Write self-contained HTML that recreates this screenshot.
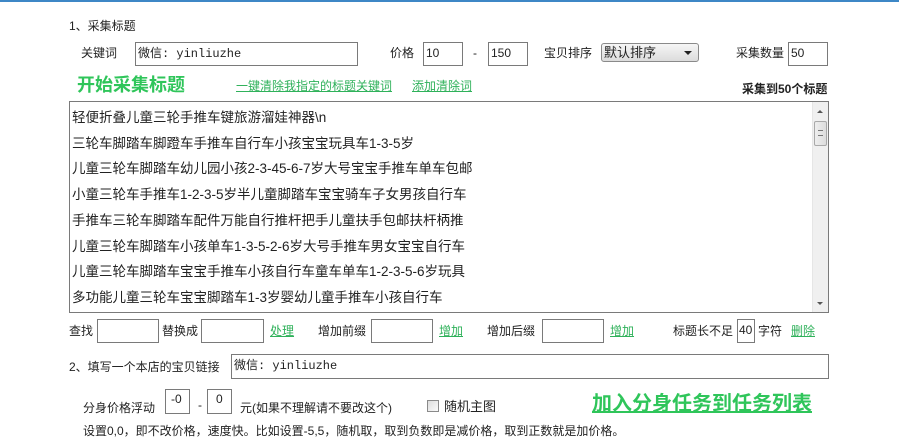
<!DOCTYPE html>
<html><head><meta charset="utf-8"><style>
*{margin:0;padding:0;box-sizing:border-box}
body{width:899px;height:439px;background:#fff;position:relative;overflow:hidden;font-family:"Liberation Sans","Noto Sans CJK SC",sans-serif;font-size:12px;color:#222}
.a{position:absolute;white-space:nowrap;line-height:14px}
.in{position:absolute;border:1px solid #7a7a7a;background:#fff;font-size:12px;line-height:20px;padding-left:2px;white-space:nowrap}
.lk{color:#2fb15a;text-decoration:underline}
.big{color:#2fc55a;font-weight:bold;font-size:18px;line-height:22px}
.mono{font-family:"Liberation Mono","Noto Sans CJK SC",monospace;font-size:12px}
</style></head><body>
<div style="position:absolute;left:0;top:0;width:899px;height:2px;background:#3d87c6"></div>
<div class="a" style="left:69px;top:19px">1、采集标题</div>
<div class="a" style="left:81px;top:46px">关键词</div>
<div class="in" style="left:135px;top:42px;width:223px;height:24px"><span class="mono">微信: yinliuzhe</span></div>
<div class="a" style="left:390px;top:46px">价格</div>
<div class="in" style="left:423px;top:42px;width:40px;height:24px">10</div>
<div class="a" style="left:473px;top:46px">-</div>
<div class="in" style="left:488px;top:42px;width:40px;height:24px">150</div>
<div class="a" style="left:544px;top:46px">宝贝排序</div>
<div style="position:absolute;left:601px;top:43px;width:98px;height:19px;border:1px solid #8a8a8a;border-radius:3px;background:linear-gradient(#f6f6f6,#dcdcdc);font-size:13px;line-height:17px;padding-left:2px">默认排序<span style="position:absolute;right:6px;top:7px;width:0;height:0;border-left:4px solid transparent;border-right:4px solid transparent;border-top:4px solid #222"></span></div>
<div class="a" style="left:736px;top:46px">采集数量</div>
<div class="in" style="left:788px;top:42px;width:40px;height:24px">50</div>
<div class="a big" style="left:77px;top:74px">开始采集标题</div>
<div class="a lk" style="left:236px;top:79px">一键清除我指定的标题关键词</div>
<div class="a lk" style="left:412px;top:79px">添加清除词</div>
<div class="a" style="left:742px;top:82px;font-weight:bold">采集到50个标题</div>
<div style="position:absolute;left:69px;top:101px;width:760px;height:212px;border:1px solid #7a7a7a;background:#fff;overflow:hidden">
<div style="position:absolute;left:2px;top:3px;font-size:13.5px;line-height:25.7px;white-space:nowrap">
轻便折叠儿童三轮手推车键旅游溜娃神器\n<br>三轮车脚踏车脚蹬车手推车自行车小孩宝宝玩具车1-3-5岁<br>儿童三轮车脚踏车幼儿园小孩2-3-45-6-7岁大号宝宝手推车单车包邮<br>小童三轮车手推车1-2-3-5岁半儿童脚踏车宝宝骑车子女男孩自行车<br>手推车三轮车脚踏车配件万能自行推杆把手儿童扶手包邮扶杆柄推<br>儿童三轮车脚踏车小孩单车1-3-5-2-6岁大号手推车男女宝宝自行车<br>儿童三轮车脚踏车宝宝手推车小孩自行车童车单车1-2-3-5-6岁玩具<br>多功能儿童三轮车宝宝脚踏车1-3岁婴幼儿童手推车小孩自行车</div>
<div style="position:absolute;right:0;top:0;width:16px;height:210px;background:#f0f0f0;border-left:1px solid #e6e6e6">
<div style="position:absolute;left:4px;top:8px;border-left:3px solid transparent;border-right:3px solid transparent;border-bottom:3px solid #555"></div>
<div style="position:absolute;left:1px;top:19px;width:13px;height:25px;border:1px solid #a9a9a9;border-radius:2px;background:linear-gradient(90deg,#eee,#ddd)"></div>
<div style="position:absolute;left:5px;top:28px;width:5px;height:6px;border-top:1px solid #777;border-bottom:1px solid #777"></div>
<div style="position:absolute;left:4px;top:200px;border-left:3px solid transparent;border-right:3px solid transparent;border-top:3px solid #555"></div>
</div></div>
<div class="a" style="left:69px;top:324px">查找</div>
<div class="in" style="left:97px;top:319px;width:62px;height:24px"></div>
<div class="a" style="left:162px;top:324px">替换成</div>
<div class="in" style="left:201px;top:319px;width:63px;height:24px"></div>
<div class="a lk" style="left:270px;top:324px">处理</div>
<div class="a" style="left:318px;top:324px">增加前缀</div>
<div class="in" style="left:371px;top:319px;width:62px;height:24px"></div>
<div class="a lk" style="left:439px;top:324px">增加</div>
<div class="a" style="left:487px;top:324px">增加后缀</div>
<div class="in" style="left:542px;top:319px;width:62px;height:24px"></div>
<div class="a lk" style="left:610px;top:324px">增加</div>
<div class="a" style="left:673px;top:324px">标题长不足</div>
<div class="in" style="left:737px;top:319px;width:18px;height:24px;padding-left:1px">40</div>
<div class="a" style="left:758px;top:324px">字符</div>
<div class="a lk" style="left:791px;top:324px">删除</div>
<div class="a" style="left:69px;top:360px">2、填写一个本店的宝贝链接</div>
<div class="in" style="left:231px;top:354px;width:598px;height:25px"><span class="mono">微信: yinliuzhe</span></div>
<div class="a" style="left:83px;top:401px">分身价格浮动</div>
<div class="in" style="left:165px;top:389px;width:25px;height:25px;padding-left:5px;line-height:18px">-0</div>
<div class="a" style="left:198px;top:398px">-</div>
<div class="in" style="left:207px;top:389px;width:25px;height:25px;padding-left:8px;line-height:18px">0</div>
<div class="a" style="left:240px;top:401px">元(如果不理解请不要改这个)</div>
<div style="position:absolute;left:427px;top:400px;width:12px;height:12px;border:1px solid #8a8a8a;background:linear-gradient(135deg,#ddd,#fafafa)"></div>
<div class="a" style="left:444px;top:400px;font-size:13px">随机主图</div>
<div class="a big lk" style="left:592px;top:392px;color:#2fc55a;font-size:20px;line-height:24px">加入分身任务到任务列表</div>
<div class="a" style="left:83px;top:424px">设置0,0，即不改价格，速度快。比如设置-5,5，随机取，取到负数即是减价格，取到正数就是加价格。</div>
</body></html>
